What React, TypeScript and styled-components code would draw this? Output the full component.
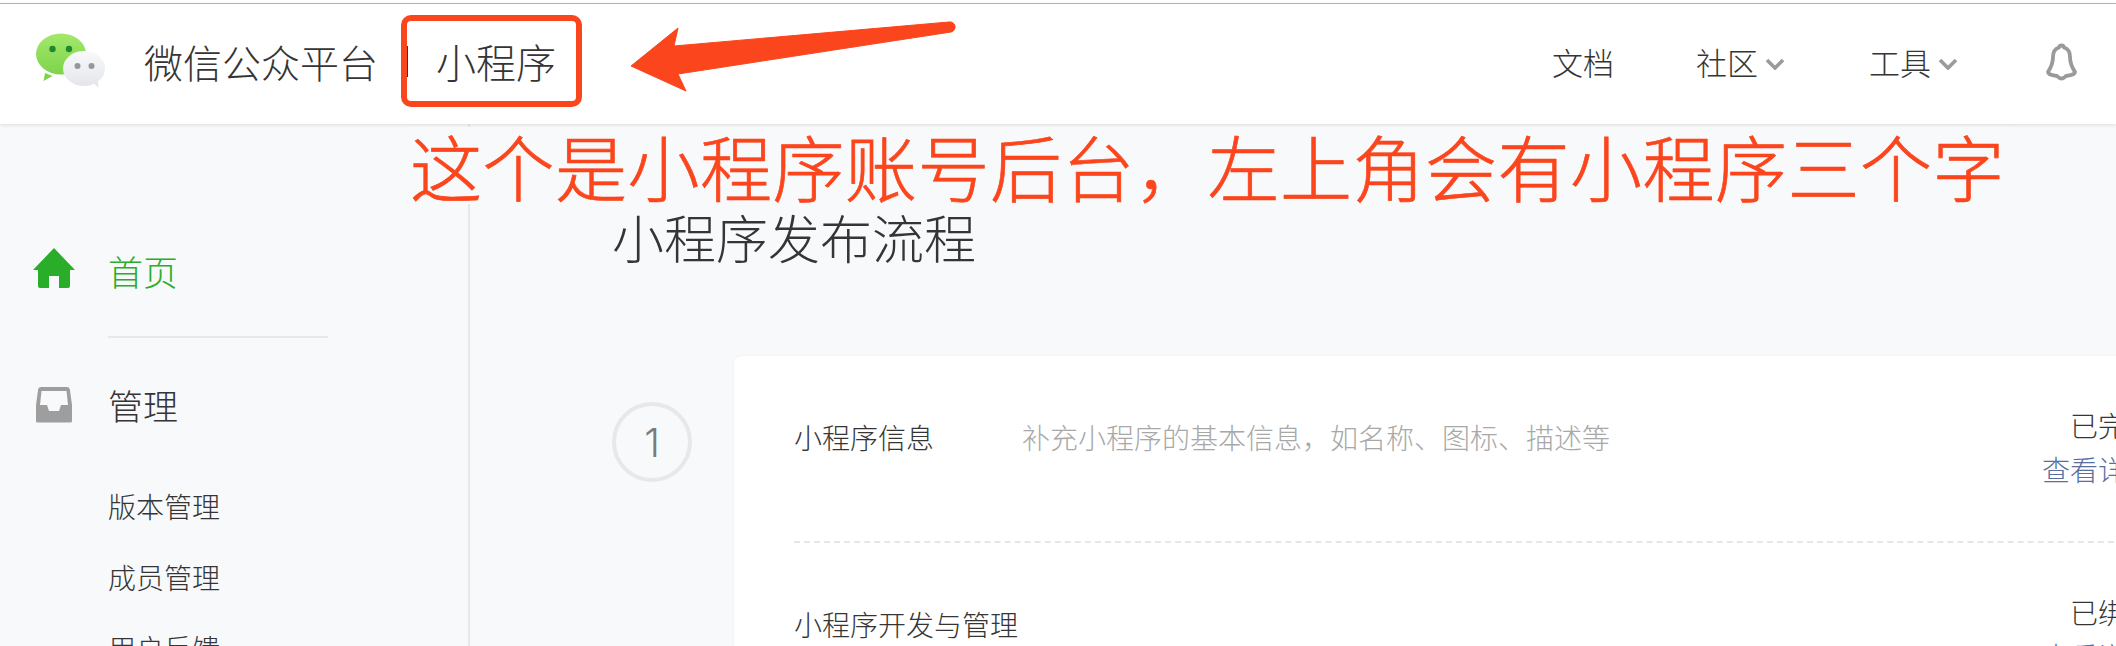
import styled, { createGlobalStyle } from "styled-components";

const GlobalStyle = createGlobalStyle`
  * {
    box-sizing: border-box;
  }
  html, body {
    margin: 0;
    padding: 0;
    background: #f8f9fb;
  }
  body {
    font-family: "Noto Sans CJK SC", "Liberation Sans", sans-serif;
    font-weight: 300;
    color: #353535;
  }
`;

const Page = styled.div`
  position: relative;
  width: 2116px;
  height: 646px;
  overflow: hidden;
  display: flex;
  flex-direction: column;
`;

const TopEdge = styled.div`
  flex: none;
  height: 4px;
  background: #fff;
  border-bottom: 1px solid #b5b5b5;
`;

const Header = styled.header`
  flex: none;
  height: 120px;
  padding: 0 38px 0 36px;
  background: #fff;
  box-shadow: 0 1px 4px rgba(0, 0, 0, 0.12);
  display: flex;
  align-items: center;
  justify-content: space-between;
  position: relative;
  z-index: 1;
`;

const Brand = styled.div`
  display: flex;
  align-items: center;
  padding-bottom: 6px;
`;

const Logo = styled.svg`
  width: 70px;
  height: 60px;
  margin-right: 38px;
`;

const BrandTitle = styled.span`
  font-size: 39px;
  line-height: 48px;
  color: #353535;
`;

const BrandName = styled(BrandTitle)`
  font-size: 40px;
`;

const BrandBar = styled.i`
  width: 2px;
  height: 31px;
  margin: 0 28px 0 28px;
  background: #353535;
`;

const Nav = styled.nav`
  display: flex;
  align-items: center;
  padding-bottom: 4px;
`;

const NavItem = styled.a<{ $gap: number }>`
  display: flex;
  align-items: center;
  gap: 7px;
  margin-right: ${(p) => p.$gap}px;
  font-size: 31px;
  line-height: 40px;
  color: #353535;
`;

const Chevron = styled.svg`
  width: 20px;
  height: 12px;
  margin-top: 3px;
`;

const Bell = styled.svg`
  width: 33px;
  height: 38px;
`;

const Body = styled.div`
  flex: 1;
  display: flex;
  min-height: 0;
`;

const Sidebar = styled.aside`
  flex: none;
  width: 470px;
  padding-top: 123px;
  border-right: 2px solid #e7e8eb;
`;

const NavGroup = styled.div<{ $active?: boolean }>`
  display: flex;
  align-items: center;
  padding-left: 33px;
  font-size: 35px;
  line-height: 48px;
  color: ${(p) => (p.$active ? "#2aae2a" : "#353535")};
`;

const GroupIcon = styled.span<{ $lift?: number }>`
  flex: none;
  width: 75px;
  display: flex;
  margin-top: ${(p) => p.$lift ?? 0}px;
`;

const SideDivider = styled.hr`
  width: 220px;
  height: 2px;
  margin: 41px 0 43px 108px;
  border: 0;
  background: #e7e8eb;
`;

const SubList = styled.ul`
  list-style: none;
  margin: 42px 0 0;
  padding: 0 0 0 108px;
`;

const SubItem = styled.li`
  font-size: 28px;
  line-height: 71px;
  color: #353535;
`;

const Main = styled.main`
  flex: 1;
  min-width: 0;
  padding: 78px 0 0 142px;
`;

const PageTitle = styled.h1`
  margin: 0 0 84px;
  font-size: 52px;
  line-height: 70px;
  font-weight: 300;
  color: #353535;
`;

const Step = styled.section`
  display: flex;
  align-items: flex-start;
  gap: 42px;
  width: 1542px;
`;

const StepNumber = styled.div`
  flex: none;
  width: 80px;
  height: 80px;
  margin-top: 46px;
  border: 4px solid #e7e8eb;
  border-radius: 50%;
  display: flex;
  align-items: center;
  justify-content: center;
  font-family: Inter, "Liberation Sans", sans-serif;
  font-weight: 300;
  font-size: 40px;
  color: #7b7b7b;
`;

const Card = styled.div`
  flex: 1;
  padding-left: 60px;
  background: #fff;
  border-radius: 8px;
  box-shadow: 0 0 3px rgba(0, 0, 0, 0.05);
`;

const Row = styled.div`
  height: 187px;
  padding-top: 47px;
  display: flex;
  align-items: flex-start;
  border-bottom: 2px dashed #e4e6ea;
`;

const RowName = styled.div`
  flex: none;
  width: 228px;
  margin-top: 12px;
  font-size: 28px;
  line-height: 44px;
  white-space: nowrap;
  color: #353535;
`;

const RowDesc = styled.div`
  flex: 1;
  margin-top: 12px;
  font-size: 28px;
  line-height: 44px;
  color: #a8a8a8;
`;

const RowStatus = styled.div`
  flex: none;
  text-align: right;
  font-size: 28px;
  line-height: 44px;
  color: #353535;
`;

const DetailLink = styled.a`
  display: block;
  color: #5a6f9f;
`;

const RedBox = styled.div`
  position: absolute;
  left: 401px;
  top: 15px;
  width: 181px;
  height: 92px;
  border: 6px solid #fb451c;
  border-radius: 10px;
  z-index: 2;
`;

const Arrow = styled.svg`
  position: absolute;
  left: 625px;
  top: 15px;
  width: 340px;
  height: 85px;
  z-index: 2;
`;

const Remark = styled.div`
  position: absolute;
  left: 408px;
  top: 127px;
  height: 77px;
  padding: 0 8px 0 2px;
  background: #f8f9fb;
  font-size: 72px;
  line-height: 75px;
  letter-spacing: 0.5px;
  font-weight: 300;
  -webkit-text-stroke: 0.7px #fb451c;
  white-space: nowrap;
  color: #fb451c;
  z-index: 2;
`;

const App = () => (
  <Page>
    <GlobalStyle />
    <TopEdge />
    <Header>
      <Brand>
        <Logo viewBox="0 0 70 60">
          <defs>
            <linearGradient id="greenBubble" x1="0" y1="0" x2="0" y2="1">
              <stop offset="0" stopColor="#a3e86b" />
              <stop offset="1" stopColor="#7ed34b" />
            </linearGradient>
            <linearGradient id="whiteBubble" x1="0" y1="0" x2="0" y2="1">
              <stop offset="0" stopColor="#f8f9fb" />
              <stop offset="1" stopColor="#e4e6ec" />
            </linearGradient>
          </defs>
          <path d="M9 42l-1.500 8 9-5z" fill="#7ed34b" />
          <ellipse cx="25" cy="23" rx="25" ry="20.500" fill="url(#greenBubble)" />
          <circle cx="16.500" cy="18" r="3.200" fill="#1f8a2c" />
          <circle cx="33" cy="18" r="3.200" fill="#1f8a2c" />
          <path d="M56 50l6.500 7-1-8z" fill="#e4e6ec" />
          <ellipse cx="48" cy="37.500" rx="21" ry="17.500" fill="url(#whiteBubble)" />
          <circle cx="41.500" cy="35" r="3" fill="#95979c" />
          <circle cx="55.500" cy="35" r="3" fill="#95979c" />
        </Logo>
        <BrandTitle>微信公众平台</BrandTitle>
        <BrandBar />
        <BrandName>小程序</BrandName>
      </Brand>
      <Nav>
        <NavItem $gap={82}>文档</NavItem>
        <NavItem $gap={84}>
          社区
          <Chevron viewBox="0 0 20 12">
            <path d="M2 2l8 8 8-8" fill="none" stroke="#9a9a9a" strokeWidth="3.600" />
          </Chevron>
        </NavItem>
        <NavItem $gap={87}>
          工具
          <Chevron viewBox="0 0 20 12">
            <path d="M2 2l8 8 8-8" fill="none" stroke="#9a9a9a" strokeWidth="3.600" />
          </Chevron>
        </NavItem>
        <Bell viewBox="0 0 33 38">
          <path
            d="M16.500 2.500c-1.300 0-2.200.8-2.500 2C9.700 5.800 8 9.300 8 14c0 6-2 10.500-5 15 0 2 4 3.500 9 4 1.500 1.600 3 2.500 4.500 2.500s3-.9 4.500-2.500c5-.5 9-2 9-4-3-4.500-5-9-5-15 0-4.700-1.700-8.200-6-9.500-.3-1.200-1.200-2-2.500-2z"
            fill="none"
            stroke="#9a9a9a"
            strokeWidth="3.800"
            strokeLinejoin="round"
          />
        </Bell>
      </Nav>
    </Header>
    <Body>
      <Sidebar>
        <NavGroup $active>
          <GroupIcon $lift={-6}>
            <svg width="42" height="40" viewBox="0 0 42 40">
              <path
                d="M21 0L42 22h-5v16a2 2 0 0 1-2 2H26V28H16v12H7a2 2 0 0 1-2-2V22H0z"
                fill="#2aae2a"
              />
            </svg>
          </GroupIcon>
          首页
        </NavGroup>
        <SideDivider />
        <NavGroup>
          <GroupIcon>
            <svg width="42" height="36" viewBox="0 0 42 36">
              <path
                d="M8 0h26a3 3 0 0 1 2.800 2L39 18v16a1.500 1.500 0 0 1-1.500 1.500h-33A1.500 1.500 0 0 1 3 34V18L5.200 2A3 3 0 0 1 8 0zm.5 4L7 18h7l2 6h10l2-6h7L33.500 4z"
                fill="#9e9e9e"
                fillRule="evenodd"
              />
            </svg>
          </GroupIcon>
          管理
        </NavGroup>
        <SubList>
          <SubItem>版本管理</SubItem>
          <SubItem>成员管理</SubItem>
          <SubItem>用户反馈</SubItem>
        </SubList>
      </Sidebar>
      <Main>
        <PageTitle>小程序发布流程</PageTitle>
        <Step>
          <StepNumber>1</StepNumber>
          <Card>
            <Row>
              <RowName>小程序信息</RowName>
              <RowDesc>补充小程序的基本信息，如名称、图标、描述等</RowDesc>
              <RowStatus>
                已完成
                <DetailLink>查看详情</DetailLink>
              </RowStatus>
            </Row>
            <Row>
              <RowName>小程序开发与管理</RowName>
              <RowDesc />
              <RowStatus>
                已绑定
                <DetailLink>查看详情</DetailLink>
              </RowStatus>
            </Row>
          </Card>
        </Step>
      </Main>
    </Body>
    <RedBox />
    <Arrow viewBox="0 0 340 85">
      <path
        d="M6 51L53 13l-4 18L324 7a5 5 0 0 1 2 10L53 59l8 17z"
        fill="#fb451c"
        stroke="#fb451c"
        strokeLinejoin="round"
      />
    </Arrow>
    <Remark>这个是小程序账号后台，左上角会有小程序三个字</Remark>
  </Page>
);

export default App;
